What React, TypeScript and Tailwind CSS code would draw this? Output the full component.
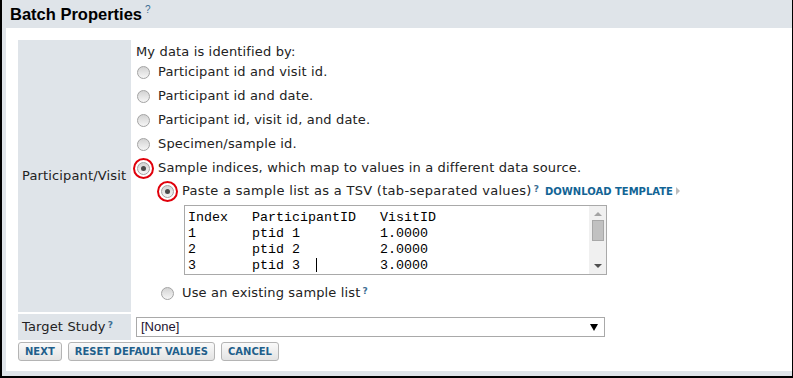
import React from 'react';

const body = { fontFamily: '"DejaVu Sans", Verdana, sans-serif' };
const arial = { fontFamily: '"Liberation Sans", Arial, sans-serif' };
const mono = { fontFamily: '"Liberation Mono", "Courier New", monospace' };

function Help() {
	return (
		<sup className="ml-[2px] text-[9px] font-bold text-[#3d6f94] relative -top-[2px]" style={body}>
			?
		</sup>
	);
}

function Radio({ checked = false, ring = false }: { checked?: boolean; ring?: boolean }) {
	return (
		<span className="relative inline-flex shrink-0 w-[13px] h-[13px]">
			<span className="w-full h-full rounded-full border border-[#a3a3a3] bg-linear-to-b from-[#d3d3d3] to-[#f6f6f6] flex items-center justify-center">
				{checked && <span className="w-[5px] h-[5px] rounded-full bg-[#4a4a4a]" />}
			</span>
			{ring && (
				<span className="absolute -left-[4px] -top-[4px] w-[21px] h-[21px] rounded-full border-2 border-[#e0000b]" />
			)}
		</span>
	);
}

function Option({ label, checked, ring }: { label: string; checked?: boolean; ring?: boolean }) {
	return (
		<div className="h-[24px] flex items-center pl-[1px]">
			<Radio checked={checked} ring={ring} />
			<span className="ml-[8px]">{label}</span>
		</div>
	);
}

function Button({ children }: { children: React.ReactNode }) {
	return (
		<button
			className="h-[19px] px-[6px] rounded-[3px] border border-[#b4b4b4] bg-linear-to-b from-[#fafafa] to-[#e3e3e3] text-[10px] font-bold text-[#1f5f8b] leading-none"
			style={body}
		>
			{children}
		</button>
	);
}

const rows = [
	['Index', 'ParticipantID', 'VisitID'],
	['1', 'ptid 1', '1.0000'],
	['2', 'ptid 2', '2.0000'],
	['3', 'ptid 3', '3.0000'],
];

export default function App() {
	return (
		<div className="w-[793px] h-[378px] border-l-2 border-r border-b-2 border-black bg-[#dfe4e9] flex flex-col text-[#222]">
			<div className="h-[28px] shrink-0 flex items-center pl-[8px]">
				<span className="text-[16.5px] font-bold text-black" style={arial}>
					Batch Properties
				</span>
				<sup className="ml-[3px] text-[10px] text-[#3d6f94] relative -top-[4px]" style={arial}>
					?
				</sup>
			</div>
			<div className="flex-1 pl-[4px] pb-[5px]">
				<div className="h-full bg-white pt-[12px] pl-[12px] text-[13px] tracking-[0.15px]" style={body}>
					<div className="flex gap-[5px] h-[272px]">
						<div className="w-[113px] bg-[#dfe4e9] flex items-center pl-[4px]">Participant/Visit</div>
						<div className="flex flex-col pt-[4px]">
							<div className="h-[16px] leading-[16px]">My data is identified by:</div>
							<Option label="Participant id and visit id." />
							<Option label="Participant id and date." />
							<Option label="Participant id, visit id, and date." />
							<Option label="Specimen/sample id." />
							<Option label="Sample indices, which map to values in a different data source." checked ring />
							<div className="h-[22px] flex items-center pl-[25px]">
								<Radio checked ring />
								<span className="ml-[8px] tracking-[0.3px]">Paste a sample list as a TSV (tab-separated values)</span>
								<Help />
								<span className="ml-[6px] text-[10px] font-bold text-[#126495] tracking-normal">DOWNLOAD TEMPLATE</span>
								<span className="ml-[3px] w-0 h-0 border-y-[4px] border-y-transparent border-l-[4px] border-l-[#bdbdbd]" />
							</div>
							<div className="relative mt-[3px] ml-[48px] w-[423px] h-[70px] border border-[#a9a9a9] flex">
								<div className="flex-1 pl-[3px] pt-[4px] text-[13.33px] leading-[16px] text-black tracking-normal" style={mono}>
									{rows.map((r) => (
										<div key={r[0]} className="flex">
											<span className="w-[64px]">{r[0]}</span>
											<span className="w-[128px]">{r[1]}</span>
											<span>{r[2]}</span>
										</div>
									))}
								</div>
								<span className="absolute left-[131px] top-[52px] w-[1px] h-[14px] bg-black" />
								<div className="w-[17px] bg-[#f0f0f0] flex flex-col items-center py-[6px]">
									<span className="w-0 h-0 border-x-[4px] border-x-transparent border-b-[4px] border-b-[#a3a3a3]" />
									<span className="mt-[4px] w-[12px] h-[21px] bg-[#c1c1c1] border border-[#a8a8a8]" />
									<span className="mt-auto w-0 h-0 border-x-[4px] border-x-transparent border-t-[4px] border-t-[#505050]" />
								</div>
							</div>
							<div className="mt-[8px] h-[20px] flex items-center pl-[25px]">
								<Radio />
								<span className="ml-[8px]">Use an existing sample list</span>
								<Help />
							</div>
						</div>
					</div>
					<div className="mt-[2px] flex gap-[5px] h-[26px]">
						<div className="w-[113px] bg-[#dfe4e9] flex items-center pl-[4px]">
							Target Study
							<Help />
						</div>
						<div className="flex items-center">
							<div className="w-[469px] h-[20px] border border-[#a9a9a9] flex items-center pl-[4px] pr-[6px] text-[13px] text-[#1d1330] tracking-normal" style={arial}>
								<span className="flex-1">[None]</span>
								<span className="w-0 h-0 border-x-[4px] border-x-transparent border-t-[7px] border-t-black" />
							</div>
						</div>
					</div>
					<div className="mt-[2px] flex gap-[6px] tracking-normal">
						<Button>NEXT</Button>
						<Button>RESET DEFAULT VALUES</Button>
						<Button>CANCEL</Button>
					</div>
				</div>
			</div>
		</div>
	);
}
